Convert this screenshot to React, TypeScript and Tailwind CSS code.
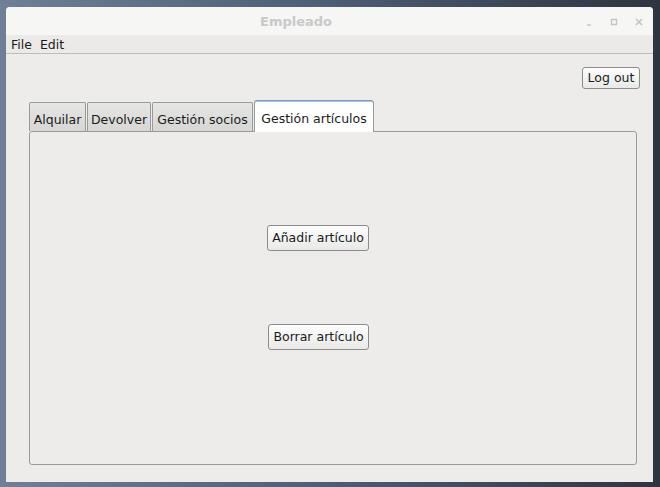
import { ReactNode } from 'react';

const font = { fontFamily: '"DejaVu Sans", Verdana, sans-serif' };

function SwingButton({ children, className }: { children: ReactNode; className?: string }) {
  return (
    <button
      className={`flex items-center justify-center rounded-[3px] border border-[#8c8c8c] bg-gradient-to-b from-[#fdfdfd] to-[#e9e9e8] text-[12.5px] text-[#1a1a1a] ${className ?? ''}`}
    >
      {children}
    </button>
  );
}

function Tab({ label, active, width }: { label: string; active?: boolean; width: string }) {
  if (active) {
    return (
      <div
        className={`relative z-10 -mb-px flex h-[32px] ${width} items-center justify-center rounded-t-[3px] border border-b-0 border-[#9a9a9a] border-t-[#7d9bc6] bg-white pt-[6px] text-[12.5px] text-[#1a1a1a] shadow-[inset_0_1px_0_#a9c0e0]`}
      >
        {label}
      </div>
    );
  }
  return (
    <div
      className={`flex h-[29px] ${width} items-center justify-center rounded-t-[2px] border border-b-0 border-[#9a9a9a] bg-gradient-to-b from-[#e6e6e5] to-[#d6d6d5] pt-[6px] text-[12.5px] text-[#1a1a1a]`}
    >
      {label}
    </div>
  );
}

export default function App() {
  return (
    <div
      className="h-[487px] w-[660px] overflow-hidden bg-gradient-to-r from-[#6f7f96] via-[#4d5d75] to-[#2f3540] pl-[6px] pt-[7px]"
      style={font}
    >
      <div className="flex h-[475px] w-[647px] flex-col rounded-t-[4px] bg-[#edeceb]">
        {/* title bar */}
        <div className="relative flex h-[28px] items-center rounded-t-[4px] bg-[#f6f6f5] pl-[254px] pt-[2px]">
          <span className="text-[13px] font-bold text-[#c9c9c9]">Empleado</span>
          <div className="absolute right-[9px] top-[10px] flex items-center gap-[15px] text-[#c4c4c4]">
            <svg width="10" height="10" viewBox="0 0 10 10">
              <path d="M3 8h4" stroke="currentColor" strokeWidth="1.4" />
            </svg>
            <svg width="10" height="10" viewBox="0 0 10 10">
              <rect x="2.5" y="2.5" width="5" height="5" fill="none" stroke="currentColor" strokeWidth="1.4" />
            </svg>
            <svg width="10" height="10" viewBox="0 0 10 10">
              <path d="M2 2l6 6M8 2l-6 6" stroke="currentColor" strokeWidth="1.6" />
            </svg>
          </div>
        </div>
        {/* menu bar */}
        <div className="flex h-[19px] items-center gap-[8px] border-b border-[#bdbdbc] bg-[#ebeae9] pl-[5px] pt-[2px] text-[12.5px] text-[#1a1a1a]">
          <span>File</span>
          <span>Edit</span>
        </div>
        {/* body */}
        <div className="flex flex-1 flex-col pl-[23px] pr-[16px]">
          <div className="mt-[13px] flex justify-end">
            <SwingButton className="-mr-[3px] h-[22px] w-[58px]">Log out</SwingButton>
          </div>
          <div className="mt-[11px] flex items-end gap-[1px]">
            <Tab label="Alquilar" width="w-[57px]" />
            <Tab label="Devolver" width="w-[64px]" />
            <Tab label="Gestión socios" width="w-[101px]" />
            <Tab label="Gestión artículos" width="w-[120px]" active />
          </div>
          <div className="flex h-[334px] flex-col rounded-[3px] border border-[#9a9a9a] bg-[#edeceb] pl-[237px]">
            <SwingButton className="mt-[93px] h-[26px] w-[102px]">Añadir artículo</SwingButton>
            <SwingButton className="ml-[1px] mt-[73px] h-[26px] w-[101px]">Borrar artículo</SwingButton>
          </div>
        </div>
      </div>
    </div>
  );
}
